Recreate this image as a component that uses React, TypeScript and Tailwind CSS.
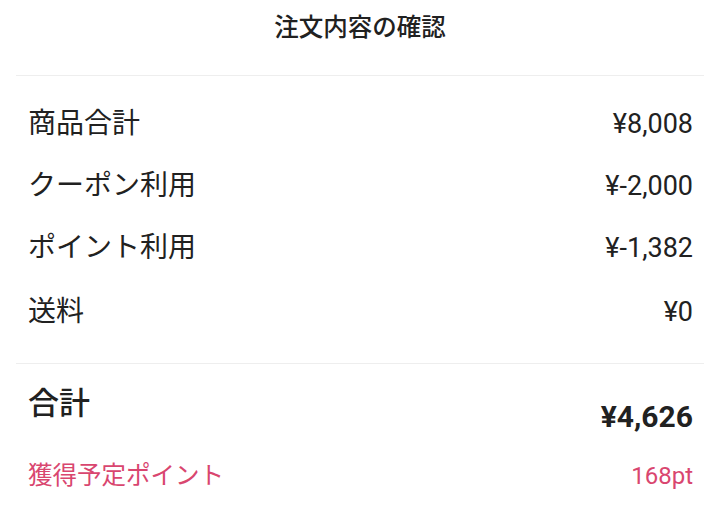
const rows = [
  { label: "商品合計", value: "¥8,008" },
  { label: "クーポン利用", value: "¥-2,000" },
  { label: "ポイント利用", value: "¥-1,382" },
  { label: "送料", value: "¥0" },
];

export default function App() {
  return (
    <div
      className="min-h-[507px] w-[720px] bg-white text-[#212121]"
      style={{ fontFamily: 'Roboto, "Noto Sans CJK JP", sans-serif' }}
    >
      <div className="mx-4 flex h-[76px] items-start justify-center border-b border-[#eeeeee] pt-[12px]">
        <h1 className="text-[24.5px] font-medium leading-[32px]">注文内容の確認</h1>
      </div>

      <div className="mx-4 border-b border-[#eeeeee] pl-3 pr-[11px] pt-[17px] pb-[20px]">
        {rows.map((r, i) => (
          <div
            key={r.label}
            className={`flex items-center justify-between ${i === 3 ? "h-[64px] pt-[2px]" : "h-[62px]"}`}
          >
            <span className="text-[28px] leading-none">{r.label}</span>
            <span className="text-[27px] leading-none">{r.value}</span>
          </div>
        ))}
      </div>

      <div className="mx-4 pl-3 pr-[11px]">
        <div className="flex justify-between pt-[22px]">
          <span className="text-[31px] font-medium leading-[36px]">合計</span>
          <span className="mt-[13px] text-[30px] font-bold leading-[36px]">¥4,626</span>
        </div>
        <div className="mt-[26px] flex items-center justify-between text-[#d9466f]">
          <span className="text-[24.5px] leading-[30px]">獲得予定ポイント</span>
          <span className="text-[24px] leading-[30px]">168pt</span>
        </div>
      </div>
    </div>
  );
}
